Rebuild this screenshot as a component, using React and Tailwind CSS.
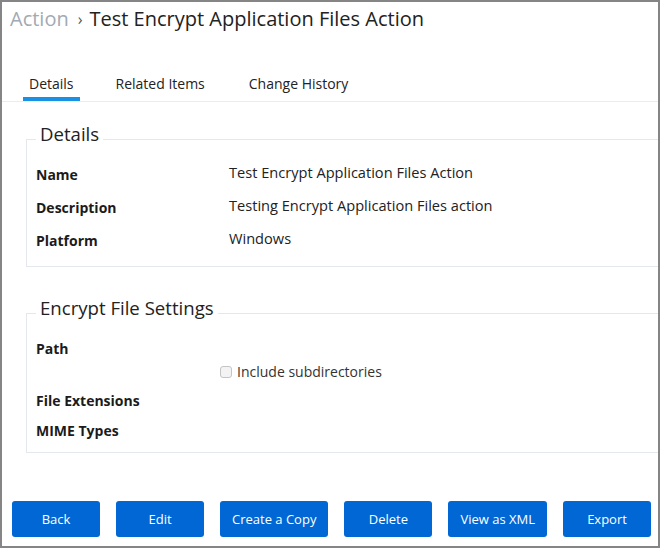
import React from "react";

const details = [
  ["Name", "Test Encrypt Application Files Action"],
  ["Description", "Testing Encrypt Application Files action"],
  ["Platform", "Windows"],
];

const buttons = ["Back", "Edit", "Create a Copy", "Delete", "View as XML", "Export"];

function Row({ label, children, className = "h-[33px]" }) {
  return (
    <div className={`grid grid-cols-[193px_1fr] items-center ${className}`}>
      <span className="text-[14px] font-bold leading-[20px] text-[#1b1b1b]">{label}</span>
      <span className="mb-[6px] text-[14.6px] leading-[20px] text-[#222]">{children}</span>
    </div>
  );
}

function Section({ title, className, children }) {
  return (
    <fieldset className={`ml-[24px] border border-r-0 border-[#e4e8ec] pl-[9px] ${className}`}>
      <legend className="px-[4px] pb-[10px] text-[18.6px] leading-[28px] text-[#222]">{title}</legend>
      {children}
    </fieldset>
  );
}

export default function App() {
  return (
    <div className="flex h-[548px] w-[660px] flex-col overflow-hidden border-2 border-[#858585] bg-white font-['Open_Sans',sans-serif]">
      <h1 className="flex items-center pl-[8px] pt-[3px] text-[20px] leading-[28px] text-[#222]">
        <span className="text-[#a2aab2]">Action</span>
        <span className="ml-[9px] mr-[7px] text-[16px] text-[#555]">›</span>
        <span>Test Encrypt Application Files Action</span>
      </h1>

      <div className="mt-[41px] flex border-b border-[#ececec] pl-[21px] text-[14px] leading-[20px] text-[#222]">
        <div className="border-b-4 border-[#1a90e4] px-[6px] pb-[3px]">Details</div>
        <div className="ml-[30px] border-b-4 border-transparent px-[6px] pb-[3px]">Related Items</div>
        <div className="ml-[32px] border-b-4 border-transparent px-[6px] pb-[3px]">Change History</div>
      </div>

      <Section title="Details" className="mt-[18px] pb-[9px]">
        {details.map(([label, value]) => (
          <Row key={label} label={label}>{value}</Row>
        ))}
      </Section>

      <Section title="Encrypt File Settings" className="mt-[27px] pb-[7px]">
        <Row label="Path" />
        <div className="grid h-[14px] grid-cols-[193px_1fr] items-center">
          <span />
          <label className="-ml-[9px] flex h-[14px] items-center gap-[5px] text-[14px] leading-[14px] text-[#333]">
            <span className="h-[12px] w-[12px] rounded-[3px] border border-[#c4c4c4] bg-[#f3f3f3]" />
            Include subdirectories
          </label>
        </div>
        <Row label="File Extensions" className="mt-[7px] h-[30px]" />
        <Row label="MIME Types" className="h-[29px]" />
      </Section>

      <div className="mt-[48px] flex gap-[16px] pl-[10px]">
        {buttons.map((b) => (
          <button
            key={b}
            className="h-[36px] min-w-[88px] whitespace-nowrap rounded-[3px] bg-[#0067d5] px-[12px] pt-[1px] text-[13px] text-white"
          >
            {b}
          </button>
        ))}
      </div>
    </div>
  );
}
